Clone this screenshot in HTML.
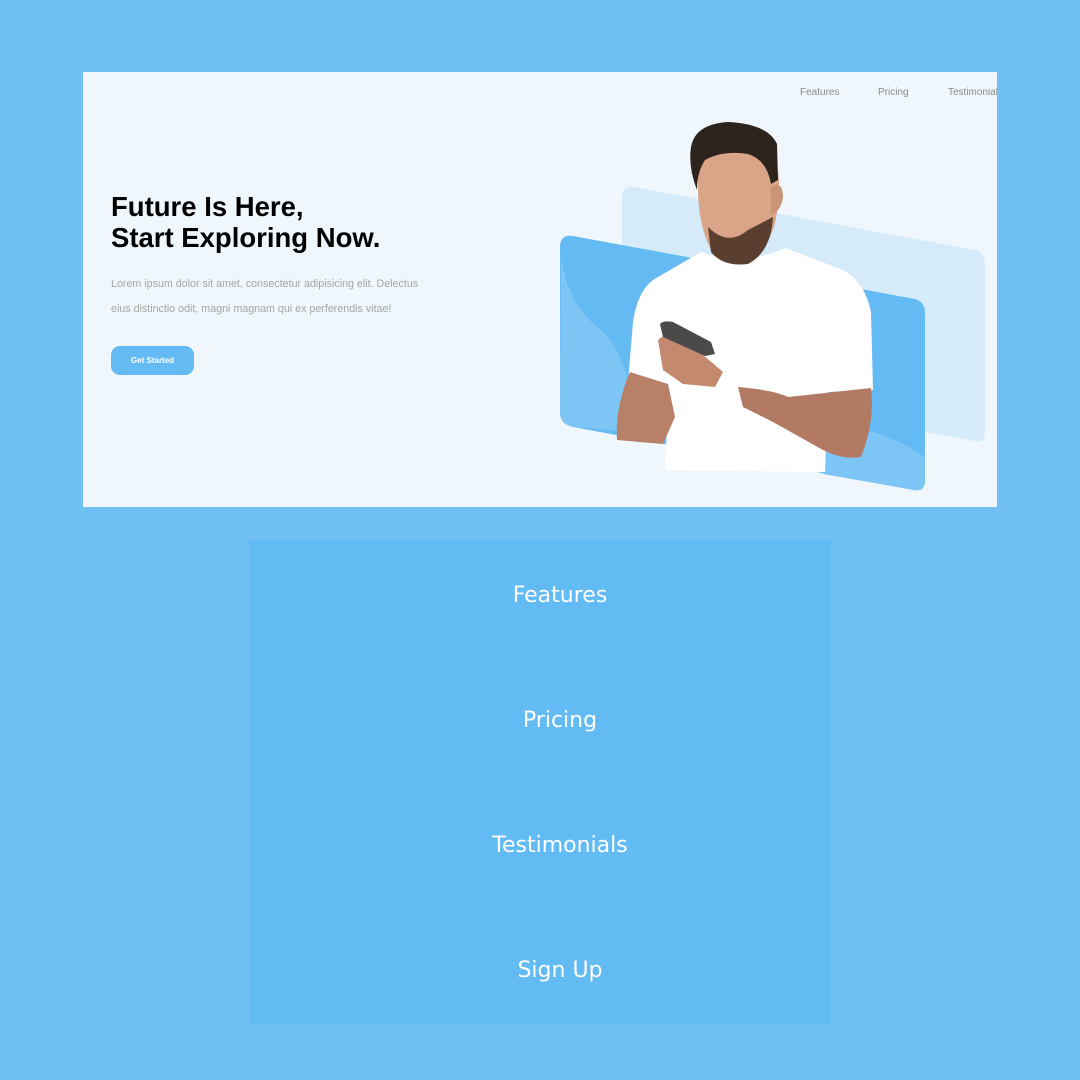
<!DOCTYPE html>
<html><head><style>
body{margin:0;width:1080px;height:1080px;background:#70c0f3;position:relative;overflow:hidden;font-family:"Liberation Sans",sans-serif}
.card{position:absolute;left:83px;top:72px;width:914px;height:435px;background:#f0f7fc;overflow:hidden}
.nav{position:absolute;top:15px;font-size:10px;color:#8a8a8a}
h1{position:absolute;left:28px;top:119px;margin:0;font-size:27.5px;line-height:31px;font-weight:bold;color:#000}
p{position:absolute;left:28px;top:200px;margin:0;font-size:10.7px;line-height:25px;color:#a5a5a5;width:318px}
.btn{position:absolute;left:28px;top:274px;width:83px;height:29px;border-radius:9px;background:#64baf3;color:#fff;font-size:8px;font-weight:bold;text-align:center;line-height:29px}
.panel{position:absolute;left:249px;top:540px;width:582px;height:484px;background:#63bbf4}
.panel div{position:absolute;left:40px;width:542px;text-align:center;color:#fff;font-size:22px;font-family:"DejaVu Sans",sans-serif}
</style></head><body>
<div class="card">
<span class="nav" style="left:717px">Features</span>
<span class="nav" style="left:795px">Pricing</span>
<span class="nav" style="left:865px">Testimonial</span>
<h1>Future Is Here,<br>Start Exploring Now.</h1>
<p>Lorem ipsum dolor sit amet, consectetur adipisicing elit. Delectus eius distinctio odit, magni magnam qui ex perferendis vitae!</p>
<div class="btn">Get Started</div>
<svg style="position:absolute;left:0;top:0" width="914" height="435">
<path d="M552 115 L892 178 Q902 181 902 192 L902 360 Q902 371 892 369 L552 308 Q539 306 539 295 L539 126 Q539 113 552 115Z" fill="#d5ebfa"/>
<path d="M490 164 L832 227 Q842 230 842 241 L842 408 Q842 420 831 418 L490 355 Q477 352 477 340 L477 175 Q477 162 490 164Z" fill="#64baf3"/>
<path d="M478 175 Q480 230 520 260 Q550 290 550 360 L490 355 Q477 352 477 340Z" fill="#7cc5f5"/>
<path d="M740 355 Q790 350 842 385 L842 408 Q842 420 831 418 L740 402Z" fill="#7cc5f5"/>
<path d="M618 180 Q660 195 702 176 L760 198 Q782 210 788 240 L790 318 L745 320 L742 400 L582 398 L585 330 L545 310 L550 250 Q555 215 575 205Z" fill="#fff"/>
<path d="M547 300 L585 312 L592 345 L580 372 L534 368 Q532 335 547 300Z" fill="#b98068"/>
<path d="M655 315 Q690 318 705 325 L788 316 Q792 350 778 385 Q760 388 740 378 L690 350 L660 335Z" fill="#b27a62"/>
<path d="M575 268 Q585 258 600 266 L640 300 L632 315 L600 312 L580 298Z" fill="#c48a70"/>
<path d="M577 252 Q580 248 590 250 L628 270 L632 282 L622 284 L580 265Z" fill="#4a4a4a"/>
<path d="M615 110 Q612 80 630 72 Q660 66 688 82 Q700 95 694 140 Q690 172 668 188 Q645 195 628 178 Q614 150 615 110Z" fill="#d9a488"/>
<path d="M688 115 Q700 108 700 125 Q698 140 688 142Z" fill="#c99478"/>
<path d="M625 155 Q645 175 665 158 L690 145 Q688 180 665 192 Q640 195 628 180Z" fill="#5a3e30"/>
<path d="M608 75 Q612 52 645 50 Q685 52 694 72 L695 108 L688 112 Q684 88 665 82 Q640 78 622 88 Q614 100 614 118 Q605 95 608 75Z" fill="#2e241e"/>
</svg>
</div>
<div class="panel">
<div style="top:43px">Features</div>
<div style="top:168px">Pricing</div>
<div style="top:293px">Testimonials</div>
<div style="top:418px">Sign Up</div>
</div>
</body></html>
